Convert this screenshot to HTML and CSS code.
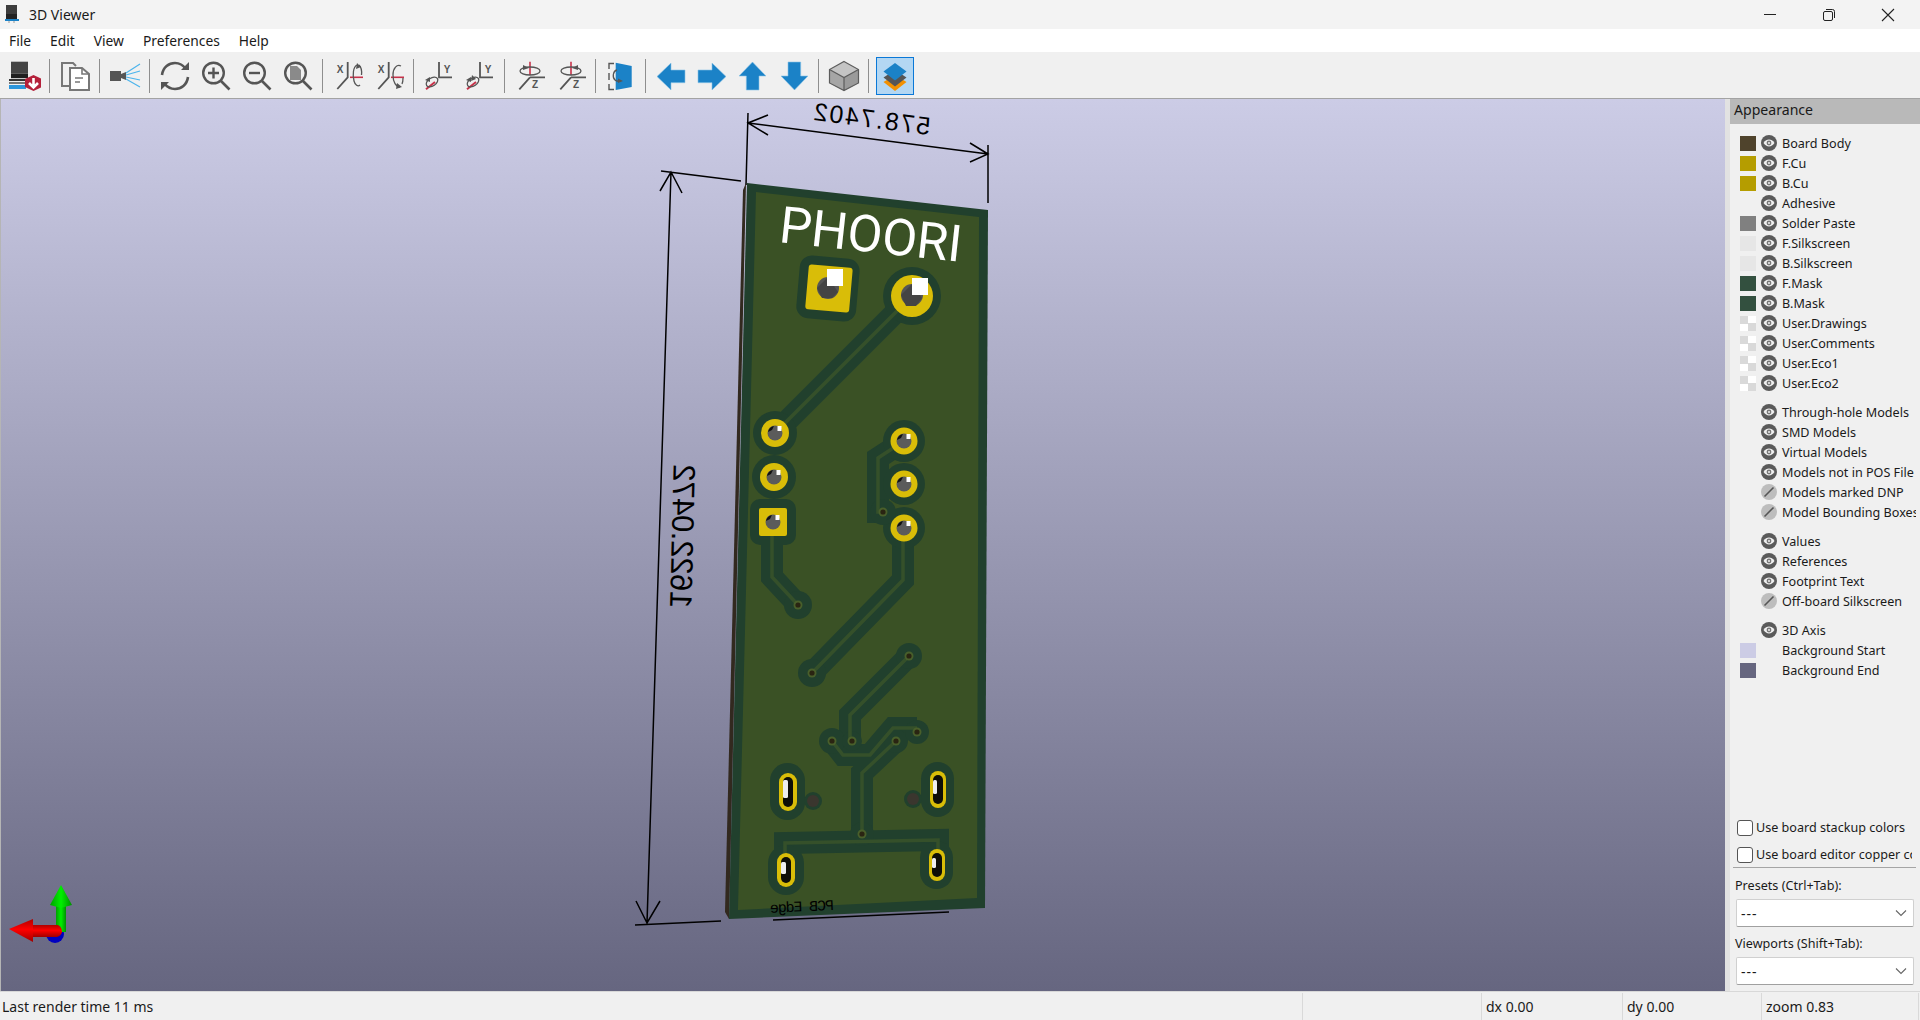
FILE: index.html
```html
<!DOCTYPE html>
<html lang="en">
<head>
  <meta charset="UTF-8" />
  <title>3D Viewer</title>
  <link rel="stylesheet" href="styles.css">
</head>
<body>
  <!-- shared icons -->
  <svg class="defs" width="0" height="0">
    <defs>
      <symbol id="i-eye" viewBox="0 0 16 16">
        <circle cx="8" cy="8" r="8" fill="#5a5a5a"/>
        <path d="M2.5 8C4 5.6 6 4.6 8 4.6S12 5.6 13.5 8C12 10.4 10 11.4 8 11.4S4 10.4 2.5 8Z" fill="#efefef"/>
        <circle cx="8" cy="8" r="2.4" fill="#777"/>
        <circle cx="8" cy="8" r="1" fill="#efefef"/>
      </symbol>
      <symbol id="i-eye-off" viewBox="0 0 16 16">
        <circle cx="8" cy="8" r="8" fill="#bdbdbd"/>
        <path d="M3.5 12.5L12.5 3.5" stroke="#555" stroke-width="1.6"/>
      </symbol>
      <symbol id="i-arrow" viewBox="0 0 32 32">
        <path d="M2 16.5L16 3V10H30V22.7H16V30Z" fill="#1b82c7" stroke="#8cc4e8" stroke-width=".6"/>
      </symbol>
      <symbol id="i-rx" viewBox="0 0 32 32">
        <text x="8" y="13" class="ico-txt" text-anchor="middle">X</text>
        <path d="M15.7 2V17.3L5.3 29" class="ico-line"/>
        <path d="M18 17.3H31" stroke="#c8324a" stroke-width="1.6"/>
        <path d="M25 5C21 7 20.5 15 22 21C23 25 26 27 28 25" class="ico-thin"/>
        <path d="M27 5C29 7 30 11 29.5 15" class="ico-thin"/>
        <path d="M25 3L29 7L24 9Z" fill="#555"/>
      </symbol>
      <symbol id="i-rx2" viewBox="0 0 32 32">
        <text x="8" y="13" class="ico-txt" text-anchor="middle">X</text>
        <path d="M15.7 2V17.3L5.3 29" class="ico-line"/>
        <path d="M18 17.3H31" stroke="#c8324a" stroke-width="1.6"/>
        <path d="M28 6C24 4 20 8 20 15C20 22 23 27 27 27" class="ico-thin"/>
        <path d="M29 24C30 22 30 20 30 18" class="ico-thin"/>
        <path d="M24 23L29 27L23 29Z" fill="#555"/>
      </symbol>
      <symbol id="i-ry" viewBox="0 0 32 32">
        <text x="24" y="13" class="ico-txt" text-anchor="middle">Y</text>
        <path d="M16 2V17.3H29" class="ico-line"/>
        <path d="M3 29.3L12 22" stroke="#c8324a" stroke-width="2"/>
        <ellipse cx="9" cy="22" rx="6.5" ry="4" transform="rotate(-35 9 22)" class="ico-thin"/>
        <path d="M2 20L7 17L7 22Z" fill="#555"/>
      </symbol>
      <symbol id="i-rz" viewBox="0 0 32 32">
        <text x="21" y="28" class="ico-txt" text-anchor="middle">Z</text>
        <path d="M16 17.3H31M16 17.3L5.3 29.3" class="ico-line"/>
        <path d="M16 1.7V15" stroke="#c8324a" stroke-width="1.6"/>
        <ellipse cx="16" cy="11" rx="10" ry="4" class="ico-thin"/>
        <path d="M9 5L15 8L9 10Z" fill="#555"/>
      </symbol>
      <symbol id="i-rz2" viewBox="0 0 32 32">
        <text x="21" y="28" class="ico-txt" text-anchor="middle">Z</text>
        <path d="M16 17.3H31M16 17.3L5.3 29.3" class="ico-line"/>
        <path d="M16 1.7V15" stroke="#c8324a" stroke-width="1.6"/>
        <ellipse cx="16" cy="11" rx="10" ry="4" class="ico-thin"/>
        <path d="M23 5L17 8L23 10Z" fill="#555"/>
      </symbol>
      <symbol id="i-mag" viewBox="0 0 32 32">
        <circle cx="13.5" cy="13" r="10.3" fill="none" stroke="#555" stroke-width="2.4"/>
        <path d="M21 21L29.5 29.5" stroke="#555" stroke-width="2.6"/>
      </symbol>
      <g id="hole-round">
        <circle r="7.5" fill="#5b5b5b"/>
        <path d="M-7 -1A7.5 7.5 0 0 1 -1 -7L-3 -3Z" fill="#111"/>
        <rect x="2.5" y="-7" width="4" height="5" fill="#fff"/>
      </g>
      <g id="via">
        <circle r="4.5" fill="#495f2b"/>
        <circle r="2.6" fill="#2a2412"/>
      </g>
    </defs>
  </svg>

  <div class="titlebar">
    <svg class="title-icon" viewBox="0 0 14 18" width="14" height="18">
      <rect x="1" y="0" width="11" height="9" fill="#3c3c3c"/>
      <rect x="1" y="9" width="11" height="5" fill="#222"/>
      <rect x="0" y="14" width="14" height="2" fill="#1b82c7"/>
      <path d="M4 16V18M9 16V18" stroke="#999"/>
    </svg>
    <span class="title-text">3D Viewer</span>
    <div class="win-btns">
      <svg width="14" height="14" viewBox="0 0 14 14"><path d="M1 6.5H13" stroke="#222"/></svg>
      <svg width="14" height="14" viewBox="0 0 14 14"><rect x="1.5" y="3.5" width="9" height="9" rx="1.5" fill="none" stroke="#222"/><path d="M4 1.5H10.5Q12.5 1.5 12.5 3.5V10" fill="none" stroke="#222"/></svg>
      <svg width="14" height="14" viewBox="0 0 14 14"><path d="M1 1L13 13M13 1L1 13" stroke="#222" stroke-width="1.1"/></svg>
    </div>
  </div>

  <div class="menubar">
    <span>File</span><span>Edit</span><span>View</span><span>Preferences</span><span>Help</span>
  </div>

  <div class="toolbar">
    <div class="tool"><svg viewBox="0 0 32 32"><rect x="2" y="1.700" width="17" height="12" fill="#444"/><rect x="2" y="13.700" width="17" height="4.500" fill="#1f1f1f"/><rect x="0" y="19" width="17" height="2" fill="#333"/><rect x="0" y="22" width="17" height="2" fill="#777"/><rect x="0" y="25" width="17" height="4" fill="#2d96dc"/><path d="M33 19V27L24.500 31L16 27V19L24.500 15Z" fill="#b5213b"/><path d="M24.500 18V27M20 23L24.500 27.500L29 23" fill="none" stroke="#fff" stroke-width="2.600"/></svg></div>
    <i class="sep"></i>
    <div class="tool"><svg viewBox="0 0 32 32"><path d="M11 26H3V3H14L17 6" fill="none" stroke="#777" stroke-width="2"/><path d="M11 8H23L30 14V30H11Z" fill="#fff" stroke="#777" stroke-width="2"/><path d="M16 18H24M16 22H21" stroke="#777" stroke-width="1.6"/><path d="M23 8V14H30" fill="none" stroke="#777" stroke-width="1.6"/></svg></div>
    <i class="sep"></i>
    <div class="tool"><svg viewBox="0 0 32 32"><rect x="1" y="11" width="11" height="10" fill="#555"/><path d="M12 14L17 12V20L12 18Z" fill="#555"/><path d="M17 13L31 4M17 15L31 11M17 17L31 20M17 19L31 27" stroke="#4cb4ec" stroke-width="1.2"/></svg></div>
    <i class="sep"></i>
    <div class="tool"><svg viewBox="0 0 32 32"><path d="M3 15C4 7 10 3 16 3C20 3 24 5 27 9" fill="none" stroke="#555" stroke-width="2.6"/><path d="M29 17C28 25 22 29 16 29C12 29 8 27 5 23" fill="none" stroke="#555" stroke-width="2.6"/><path d="M22 10H30V2Z" fill="#555"/><path d="M10 22H2V30Z" fill="#555"/></svg></div>
    <div class="tool"><svg viewBox="0 0 32 32"><use href="#i-mag"/><path d="M13.5 7.5V18.5M8 13H19" stroke="#555" stroke-width="2.4"/></svg></div>
    <div class="tool"><svg viewBox="0 0 32 32"><use href="#i-mag"/><path d="M8 13H19" stroke="#555" stroke-width="2.4"/></svg></div>
    <div class="tool"><svg viewBox="0 0 32 32"><use href="#i-mag"/><path d="M8 6H15L19 10V20H8Z" fill="#8a8a8a"/></svg></div>
    <i class="sep"></i>
    <div class="tool"><svg viewBox="0 0 32 32"><use href="#i-rx"/></svg></div>
    <div class="tool"><svg viewBox="0 0 32 32"><use href="#i-rx2"/></svg></div>
    <i class="sep"></i>
    <div class="tool"><svg viewBox="0 0 32 32"><use href="#i-ry"/></svg></div>
    <div class="tool"><svg viewBox="0 0 32 32"><use href="#i-ry"/><path d="M8 15L12 19L7 21Z" fill="#555"/></svg></div>
    <i class="sep"></i>
    <div class="tool"><svg viewBox="0 0 32 32"><use href="#i-rz"/></svg></div>
    <div class="tool"><svg viewBox="0 0 32 32"><use href="#i-rz2"/></svg></div>
    <i class="sep"></i>
    <div class="tool"><svg viewBox="0 0 32 32"><path d="M9 3.5H4V9M4 13V20M4 24V29.5H9" fill="none" stroke="#555" stroke-width="1.4"/><path d="M10.7 2.7L26.7 6V27L10.7 30Z" fill="#1b82c7"/><path d="M12 10C8 11 7 17 10 20C11 21 13 21.500 15 21" fill="none" stroke="#555" stroke-width="1.3"/><path d="M13 18.500L18 21L13 23Z" fill="#555"/></svg></div>
    <i class="sep"></i>
    <div class="tool"><svg viewBox="0 0 32 32"><use href="#i-arrow"/></svg></div>
    <div class="tool"><svg viewBox="0 0 32 32"><use href="#i-arrow" transform="matrix(-1 0 0 1 32 0)"/></svg></div>
    <div class="tool"><svg viewBox="0 0 32 32"><use href="#i-arrow" transform="rotate(90 16 16)"/></svg></div>
    <div class="tool"><svg viewBox="0 0 32 32"><use href="#i-arrow" transform="rotate(-90 16 16)"/></svg></div>
    <i class="sep"></i>
    <div class="tool"><svg viewBox="0 0 32 32"><path d="M16 1.500L30.500 9.500L16 17.500L1.500 9.500Z" fill="#c4c4c4"/><path d="M1.500 9.500L16 17.500V30.500L1.500 23Z" fill="#a6a6a6"/><path d="M30.500 9.500L16 17.500V30.500L30.500 23Z" fill="#9a9a9a"/><path d="M16 1.500L30.500 9.500V23L16 30.500L1.500 23V9.500ZM1.500 9.500L16 17.500L30.500 9.500M16 17.500V30.500" fill="none" stroke="#5c5c5c" stroke-width="1.2"/></svg></div>
    <i class="sep"></i>
    <div class="tool active"><svg viewBox="0 0 32 32"><path d="M4.500 22L16 15L27.500 22L16 31Z" fill="#f29100"/><path d="M4.500 17.500L16 10L27.500 17.500L16 26.500Z" fill="#555"/><path d="M4.500 11.500L16 3L27.500 11.500L16 20.500Z" fill="#1b82c7"/></svg></div>
  </div>

  <div class="main">
    <div class="viewport">
      <!-- viewBox follows page coordinates so board parts read off the screenshot directly -->
      <svg class="scene" viewBox="1 99 1724 892" width="1724" height="892">
        <!-- dimensions -->
        <g class="dim">
          <path d="M748 113L746 185M988 145V203M748 123L988 154M768 115L748 123L768 135M970 143L988 154L970 162"/>
          <path d="M661 171L741 181M671 172L647 923M660 191L671 172L682 193M636 901L647 923L660 901M635 925L721 921M773 920L949 912"/>
        </g>
        <text class="dim-txt" font-size="25" textLength="117" lengthAdjust="spacing" transform="translate(929 135) rotate(7.4) scale(-1 1)">578.7402</text>
        <text class="dim-txt" font-size="31" textLength="144" lengthAdjust="spacing" transform="translate(670 608) rotate(1.5) matrix(0 -1 -1 0 0 0)">1622.0472</text>

        <!-- board -->
        <path d="M746 183L743 190L725 912L729 919Z" fill="#32291f"/>
        <path d="M747 183L988 210L985 908L729 919Z" fill="#21402d"/>
        <path d="M756 192L979 217L977 898L738 910Z" fill="#3a5125"/>

        <!-- mask clearance around traces -->
        <g class="clear">
          <path d="M912 296L775 433"/>
          <path d="M772 522V577L798 605"/>
          <path d="M903 528V580L812 673"/>
          <path d="M883 512H878V458L904 441"/>
          <path d="M909 656L850 715V741"/>
          <path d="M832 741L843 755H870L893 728H917"/>
          <path d="M896 741L862 773V834"/>
          <path d="M785 870V843L938 840V865"/>
        </g>
        <g fill="#21402d">
          <circle cx="912" cy="296" r="29"/>
          <rect x="798" y="257" width="60" height="63" rx="12" transform="rotate(5 828 288)"/>
          <circle cx="775" cy="433" r="22"/>
          <circle cx="774" cy="477" r="22"/>
          <rect x="750" y="499" width="46" height="46" rx="10"/>
          <circle cx="904" cy="441" r="21"/>
          <circle cx="904" cy="484" r="21"/>
          <circle cx="904" cy="528" r="21"/>
          <circle cx="883" cy="512" r="13"/>
          <circle cx="798" cy="605" r="14"/>
          <circle cx="812" cy="673" r="14"/>
          <circle cx="909" cy="656" r="13"/>
          <circle cx="832" cy="741" r="13"/>
          <circle cx="852" cy="741" r="10"/>
          <circle cx="896" cy="741" r="12"/>
          <circle cx="917" cy="732" r="12"/>
          <circle cx="862" cy="834" r="12"/>
          <rect x="770" y="763" width="35" height="57" rx="17.500"/>
          <rect x="921" y="762" width="33" height="55" rx="16.500"/>
          <rect x="768" y="845" width="36" height="50" rx="18"/>
          <rect x="920" y="841" width="33" height="48" rx="16.500"/>
          <circle cx="813" cy="801" r="9"/>
          <circle cx="913" cy="799" r="9"/>
        </g>
        <!-- traces -->
        <g class="trace">
          <path d="M912 296L775 433"/>
          <path d="M772 522V577L798 605"/>
          <path d="M903 528V580L812 673"/>
          <path d="M883 512H878V458L904 441"/>
          <path d="M909 656L850 715V741"/>
          <path d="M832 741L843 755H870L893 728H917"/>
          <path d="M896 741L862 773V834"/>
          <path d="M785 860V843L938 840V855"/>
        </g>

        <!-- pads -->
        <g fill="#d9bd08">
          <rect x="807" y="266" width="44" height="45" rx="3" transform="rotate(5 829 288)"/>
          <circle cx="912" cy="296" r="21"/>
          <circle cx="775" cy="433" r="14"/>
          <circle cx="774" cy="477" r="14"/>
          <rect x="759" y="508" width="28" height="28" rx="2"/>
          <circle cx="904" cy="441" r="13.500"/>
          <circle cx="904" cy="484" r="13.500"/>
          <circle cx="904" cy="528" r="13.500"/>
          <rect x="779" y="773" width="18" height="38" rx="9"/>
          <rect x="930" y="771" width="16" height="37" rx="8"/>
          <rect x="777" y="853" width="18" height="34" rx="9"/>
          <rect x="929" y="849" width="16" height="32" rx="8"/>
        </g>
        <!-- big holes -->
        <circle cx="828" cy="288" r="11" fill="#555"/>
        <path d="M817 288L828 277L838 292L832 298H822Z" fill="#444"/>
        <rect x="827" y="269" width="16" height="17" fill="#fff"/>
        <circle cx="912" cy="295" r="11" fill="#555"/>
        <path d="M901 295L912 284L922 298L916 306H906Z" fill="#444"/>
        <rect x="912" y="278" width="16" height="17" fill="#fff"/>
        <use href="#hole-round" x="775" y="433"/>
        <use href="#hole-round" x="774" y="477"/>
        <use href="#hole-round" x="773" y="522"/>
        <use href="#hole-round" x="904" y="441"/>
        <use href="#hole-round" x="904" y="484"/>
        <use href="#hole-round" x="904" y="528"/>
        <!-- slots -->
        <g fill="#0e0e08">
          <rect x="783" y="777" width="10" height="30" rx="5"/>
          <rect x="933" y="775" width="10" height="29" rx="5"/>
          <rect x="781" y="857" width="10" height="26" rx="5"/>
          <rect x="932" y="853" width="10" height="24" rx="5"/>
        </g>
        <g fill="#eeeeee">
          <rect x="783" y="780" width="5" height="18" rx="1.500"/>
          <rect x="933" y="780" width="4" height="14" rx="1.500"/>
          <rect x="781" y="862" width="5" height="12" rx="1.500"/>
          <rect x="932" y="858" width="4" height="10" rx="1.500"/>
        </g>
        <circle cx="813" cy="801" r="6" fill="#3a362e"/>
        <circle cx="913" cy="799" r="6" fill="#3a362e"/>
        <!-- vias -->
        <use href="#via" x="883" y="512"/>
        <use href="#via" x="798" y="605"/>
        <use href="#via" x="812" y="673"/>
        <use href="#via" x="909" y="656"/>
        <use href="#via" x="832" y="741"/>
        <use href="#via" x="852" y="741"/>
        <use href="#via" x="896" y="741"/>
        <use href="#via" x="917" y="732"/>
        <use href="#via" x="862" y="834"/>

        <!-- silkscreen -->
        <text class="silk" font-size="51" textLength="183" lengthAdjust="spacing" transform="translate(778 242) rotate(6.2)">PHOORI</text>
        <text class="edge" font-size="15" textLength="64" lengthAdjust="spacing" transform="translate(834 910) rotate(-2.5) scale(-1 1)">PCB Edge</text>

        <!-- axes -->
        <defs>
          <linearGradient id="g-red" x1="0" y1="0" x2="0" y2="1"><stop offset="0" stop-color="#b00000"/><stop offset=".45" stop-color="#ff0000"/><stop offset="1" stop-color="#a00000"/></linearGradient>
          <linearGradient id="g-green" x1="0" y1="0" x2="1" y2="0"><stop offset="0" stop-color="#00a000"/><stop offset=".5" stop-color="#00f000"/><stop offset="1" stop-color="#009000"/></linearGradient>
        </defs>
        <circle cx="55" cy="934" r="9" fill="#0000c0"/>
        <path d="M56 903H66V932H56Z" fill="url(#g-green)"/>
        <path d="M61 885L72 905L61 908L50 905Z" fill="url(#g-green)"/>
        <path d="M33 925H58Q62 927 62 932Q61 936 57 937H33Z" fill="url(#g-red)"/>
        <path d="M9 929L33 919V942Z" fill="url(#g-red)"/>
      </svg>
    </div>

    <div class="sash"></div>

    <div class="panel">
      <div class="panel-head">Appearance</div>
      <div class="layers">
        <div class="layer"><i class="sw sw-body"></i><svg class="eye"><use href="#i-eye"/></svg><span>Board Body</span></div>
        <div class="layer"><i class="sw sw-cu"></i><svg class="eye"><use href="#i-eye"/></svg><span>F.Cu</span></div>
        <div class="layer"><i class="sw sw-cu"></i><svg class="eye"><use href="#i-eye"/></svg><span>B.Cu</span></div>
        <div class="layer"><i class="sw"></i><svg class="eye"><use href="#i-eye"/></svg><span>Adhesive</span></div>
        <div class="layer"><i class="sw sw-paste"></i><svg class="eye"><use href="#i-eye"/></svg><span>Solder Paste</span></div>
        <div class="layer"><i class="sw sw-silk"></i><svg class="eye"><use href="#i-eye"/></svg><span>F.Silkscreen</span></div>
        <div class="layer"><i class="sw sw-silk"></i><svg class="eye"><use href="#i-eye"/></svg><span>B.Silkscreen</span></div>
        <div class="layer"><i class="sw sw-mask"></i><svg class="eye"><use href="#i-eye"/></svg><span>F.Mask</span></div>
        <div class="layer"><i class="sw sw-mask"></i><svg class="eye"><use href="#i-eye"/></svg><span>B.Mask</span></div>
        <div class="layer"><i class="sw sw-check"></i><svg class="eye"><use href="#i-eye"/></svg><span>User.Drawings</span></div>
        <div class="layer"><i class="sw sw-check"></i><svg class="eye"><use href="#i-eye"/></svg><span>User.Comments</span></div>
        <div class="layer"><i class="sw sw-check"></i><svg class="eye"><use href="#i-eye"/></svg><span>User.Eco1</span></div>
        <div class="layer"><i class="sw sw-check"></i><svg class="eye"><use href="#i-eye"/></svg><span>User.Eco2</span></div>
      </div>
      <div class="layers">
        <div class="layer"><i class="sw"></i><svg class="eye"><use href="#i-eye"/></svg><span>Through-hole Models</span></div>
        <div class="layer"><i class="sw"></i><svg class="eye"><use href="#i-eye"/></svg><span>SMD Models</span></div>
        <div class="layer"><i class="sw"></i><svg class="eye"><use href="#i-eye"/></svg><span>Virtual Models</span></div>
        <div class="layer"><i class="sw"></i><svg class="eye"><use href="#i-eye"/></svg><span>Models not in POS File</span></div>
        <div class="layer"><i class="sw"></i><svg class="eye"><use href="#i-eye-off"/></svg><span>Models marked DNP</span></div>
        <div class="layer"><i class="sw"></i><svg class="eye"><use href="#i-eye-off"/></svg><span>Model Bounding Boxes</span></div>
      </div>
      <div class="layers">
        <div class="layer"><i class="sw"></i><svg class="eye"><use href="#i-eye"/></svg><span>Values</span></div>
        <div class="layer"><i class="sw"></i><svg class="eye"><use href="#i-eye"/></svg><span>References</span></div>
        <div class="layer"><i class="sw"></i><svg class="eye"><use href="#i-eye"/></svg><span>Footprint Text</span></div>
        <div class="layer"><i class="sw"></i><svg class="eye"><use href="#i-eye-off"/></svg><span>Off-board Silkscreen</span></div>
      </div>
      <div class="layers">
        <div class="layer"><i class="sw"></i><svg class="eye"><use href="#i-eye"/></svg><span>3D Axis</span></div>
        <div class="layer"><i class="sw sw-bg1"></i><i class="eye"></i><span>Background Start</span></div>
        <div class="layer"><i class="sw sw-bg2"></i><i class="eye"></i><span>Background End</span></div>
      </div>

      <div class="controls">
        <div class="check"><i class="box"></i><span>Use board stackup colors</span></div>
        <div class="check"><i class="box"></i><span>Use board editor copper colors</span></div>
        <div class="rule"></div>
        <div class="label">Presets (Ctrl+Tab):</div>
        <div class="select"><span>---</span><svg width="12" height="8" viewBox="0 0 12 8"><path d="M1 1.500L6 6.500L11 1.500" fill="none" stroke="#666" stroke-width="1.100"/></svg></div>
        <div class="label">Viewports (Shift+Tab):</div>
        <div class="select"><span>---</span><svg width="12" height="8" viewBox="0 0 12 8"><path d="M1 1.500L6 6.500L11 1.500" fill="none" stroke="#666" stroke-width="1.100"/></svg></div>
      </div>
    </div>
  </div>

  <div class="statusbar">
    <div class="cell c-main">Last render time 11 ms</div>
    <div class="cell c-a"></div>
    <div class="cell c-b">dx 0.00</div>
    <div class="cell c-c">dy 0.00</div>
    <div class="cell c-d">zoom 0.83</div>
  </div>
</body>
</html>
```

FILE: styles.css
```css
* {
  box-sizing: border-box;
}
html, body {
  margin: 0;
  height: 100%;
}
body {
  width: 1920px;
  height: 1020px;
  overflow: hidden;
  display: flex;
  flex-direction: column;
  font-family: "Noto Sans", "Open Sans", sans-serif;
  font-size: 12.6px;
  color: #1a1a1a;
  background: #f0f0f0;
}
.defs {
  position: absolute;
}

/* title bar */
.titlebar {
  height: 29px;
  flex: none;
  display: flex;
  align-items: center;
  background: #f3f3f3;
  padding-left: 5px;
}
.title-icon {
  margin-top: -2px;
}
.title-text {
  margin-left: 10px;
  font-size: 14px;
}
.win-btns {
  margin-left: auto;
  display: flex;
  gap: 45px;
  padding-right: 25px;
}

/* menu */
.menubar {
  height: 23px;
  flex: none;
  display: flex;
  align-items: center;
  gap: 19px;
  padding-left: 9px;
  background: #fff;
  font-size: 13.8px;
}

/* toolbar */
.toolbar {
  height: 47px;
  flex: none;
  display: flex;
  align-items: flex-start;
  padding: 5px 0 0 4px;
  background: #f0f0f0;
  border-bottom: 1px solid #a3a3a3;
}
.tool {
  width: 41px;
  height: 38px;
  display: flex;
  align-items: center;
  justify-content: center;
}
.tool svg {
  width: 32px;
  height: 32px;
}
.tool.active {
  width: 38px;
  margin-left: 3px;
  background: #b3d7f3;
  border: 1px solid #0a78d7;
}
.sep {
  width: 1px;
  height: 34px;
  margin: 2px 4px 0;
  background: #8e8e8e;
}
.ico-txt {
  font-family: "Liberation Sans", sans-serif;
  font-size: 10px;
  font-weight: bold;
  fill: #555;
}
.ico-line {
  fill: none;
  stroke: #555;
  stroke-width: 1.8;
}
.ico-thin {
  fill: none;
  stroke: #555;
  stroke-width: 1.3;
}

/* main area */
.main {
  flex: 1;
  min-height: 0;
  display: flex;
}
.viewport {
  width: 1725px;
  flex: none;
  border-left: 1px solid #b5b5b5;
  background: linear-gradient(#cccce6, #666680);
}
.scene {
  display: block;
}
.dim path {
  fill: none;
  stroke: #000;
  stroke-width: 1.5;
}
.dim-txt {
  font-family: "Liberation Sans", sans-serif;
  fill: #000;
}
.silk {
  font-family: "Roboto", sans-serif;
  fill: #fff;
}
.edge {
  font-family: "Liberation Mono", monospace;
  fill: #000;
}
.clear path {
  fill: none;
  stroke: #21402d;
  stroke-width: 22;
}
.trace path {
  fill: none;
  stroke: #35502a;
  stroke-width: 3.5;
}
.sash {
  width: 5px;
  flex: none;
  background: #e2e2e2;
}

/* appearance panel */
.panel {
  width: 190px;
  flex: none;
  display: flex;
  flex-direction: column;
  background: #f0f0f0;
  overflow: hidden;
}
.panel-head {
  height: 25px;
  flex: none;
  padding-left: 4px;
  line-height: 22px;
  font-size: 14.1px;
  background: #b9b9b9;
}
.layers {
  margin-top: 9px;
}
.layer {
  height: 20px;
  display: flex;
  align-items: center;
  white-space: nowrap;
  overflow: hidden;
  width: 186px;
}
.sw {
  width: 16px;
  height: 15px;
  margin-left: 10px;
  flex: none;
}
.sw-body {
  background: #4f432c;
}
.sw-cu {
  background: #b59d00;
}
.sw-paste {
  background: #808080;
}
.sw-silk {
  background: #e6e6e6;
}
.sw-mask {
  background: #33503f;
}
.sw-check {
  background: conic-gradient(#fff 25%, #d9d9d9 0 50%, #fff 0 75%, #d9d9d9 0) 0 0 / 16px 15px;
}
.sw-bg1 {
  background: #cccce5;
}
.sw-bg2 {
  background: #66667f;
}
.eye {
  width: 16px;
  height: 16px;
  margin-left: 5px;
  flex: none;
}
.layer span {
  margin-left: 5px;
}

/* bottom controls */
.controls {
  margin-top: auto;
  padding-bottom: 6px;
}
.check {
  height: 25px;
  display: flex;
  align-items: center;
  white-space: nowrap;
  overflow: hidden;
  width: 182px;
  padding-left: 7px;
  margin-bottom: 2px;
}
.box {
  width: 16px;
  height: 16px;
  flex: none;
  margin-right: 3px;
  background: #fff;
  border: 1px solid #555;
  border-radius: 3px;
}
.rule {
  height: 1px;
  margin: -2px 4px 0 3px;
  background: #a5a5a5;
}
.label {
  height: 18px;
  margin: 9px 0 4px 5px;
  line-height: 18px;
}
.select + .label {
  margin-top: 8px;
}
.select {
  height: 28px;
  margin: 0 6px;
  padding: 0 6px 0 4px;
  display: flex;
  align-items: center;
  justify-content: space-between;
  background: #fff;
  border: 1px solid #d0d0d0;
  border-bottom-color: #a0a0a0;
  border-radius: 2px;
  font-size: 14px;
  letter-spacing: 1px;
}

/* status bar */
.statusbar {
  height: 29px;
  flex: none;
  display: flex;
  align-items: stretch;
  background: #f0f0f0;
  border-top: 1px solid #d8d8d8;
  padding-top: 1px;
  font-size: 14px;
}
.cell {
  line-height: 28px;
  padding-left: 4px;
  border-left: 1px solid #d9d9d9;
}
.c-main {
  width: 1302px;
  padding-left: 2px;
  border-left: 0;
}
.c-a {
  width: 179px;
}
.c-b {
  width: 141px;
}
.c-c {
  width: 139px;
}
.c-d {
  width: 158px;
  border-right: 1px solid #d9d9d9;
}
```
